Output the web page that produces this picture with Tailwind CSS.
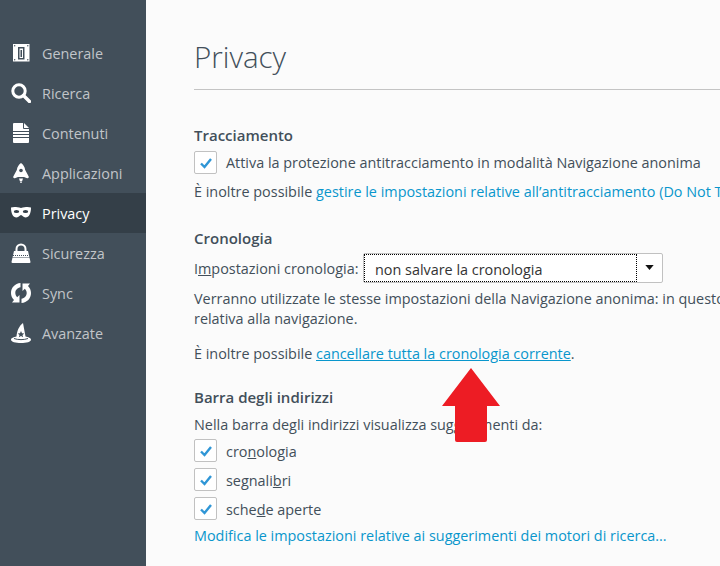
<!DOCTYPE html>
<html lang="it">
<head>
  <meta charset="UTF-8" />
  <title>Privacy</title>
  <script src="https://cdn.jsdelivr.net/npm/@tailwindcss/browser@4"></script>
</head>
<body class="w-[720px] h-[566px] overflow-hidden flex bg-[#fbfbfb] font-['Open_Sans','Noto_Sans',sans-serif] text-[14.4px] text-[#424f5a] relative">

  <aside class="w-[146px] h-full shrink-0 bg-[#424f5a] pt-[33px] text-[14.4px] text-[#c1c5c9]">
    <div class="h-10 flex items-center gap-[11px] pl-[11px]">
      <svg class="w-5 h-5" viewBox="0 0 20 20"><path fill="#fff" d="M2 1h16.500v17.500H2z"/><path fill="#424f5a" d="M7 4h6.500v12.500H7z"/><path fill="#fff" d="M8.500 5.500H12V15H8.500z"/><path fill="#424f5a" d="M9.500 7h1.500v7H9.500z"/><g fill="#424f5a"><circle cx="3.700" cy="2.700" r=".7"/><circle cx="16.800" cy="2.700" r=".7"/><circle cx="3.700" cy="16.800" r=".7"/><circle cx="16.800" cy="16.800" r=".7"/></g></svg>
      <span class="pt-[2px]">Generale</span>
    </div>
    <div class="h-10 flex items-center gap-[11px] pl-[11px]">
      <svg class="w-5 h-5" viewBox="0 0 20 20"><circle cx="8" cy="8" r="6.200" fill="none" stroke="#fff" stroke-width="3"/><path d="M12.500 12.500l6 6" stroke="#fff" stroke-width="3.400" stroke-linecap="round"/></svg>
      <span class="pt-[2px]">Ricerca</span>
    </div>
    <div class="h-10 flex items-center gap-[11px] pl-[11px]">
      <svg class="w-5 h-5" viewBox="0 0 20 20"><path fill="#fff" d="M3 0h10l5 5v14a1 1 0 0 1-1 1H3a1 1 0 0 1-1-1V1a1 1 0 0 1 1-1z"/><path stroke="#424f5a" stroke-width="1.200" d="M2 8.500h16M2 11.500h16M2 14.500h16"/><path fill="none" stroke="#424f5a" d="M12.500 0v5.500H18"/></svg>
      <span class="pt-[2px]">Contenuti</span>
    </div>
    <div class="h-10 flex items-center gap-[11px] pl-[11px]">
      <svg class="w-5 h-5" viewBox="0 0 20 20"><path fill="#fff" d="M10 0c2.200 1.500 3.800 4 4.200 7l3.500 6.500c.3 1-.5 2-1.500 1.700L13 14H7l-3.200 1.200c-1 .3-1.800-.7-1.500-1.700L5.800 7C6.200 4 7.800 1.500 10 0z"/><circle cx="10" cy="7.500" r="1.800" fill="#424f5a"/><path fill="#fff" d="M8 15.500h4l-1 3h-2zM9.300 19h1.400v1.500H9.300z"/></svg>
      <span class="pt-[2px]">Applicazioni</span>
    </div>
    <div class="h-10 flex items-center gap-[11px] pl-[11px] bg-[#343f48] text-white">
      <svg class="w-5 h-5" viewBox="0 0 20 20"><path fill="#fff" d="M0 4.500c3-1 6-.5 10 .5 4-1 7-1.500 10-.5 0 6-2 10-5.500 10-2.500 0-3-2.500-4.500-2.500S8 14.500 5.500 14.500C2 14.500 0 10.500 0 4.500z"/><ellipse cx="5.500" cy="8.500" rx="2.700" ry="1.500" fill="#343f48"/><ellipse cx="14.500" cy="8.500" rx="2.700" ry="1.500" fill="#343f48"/></svg>
      <span class="pt-[2px]">Privacy</span>
    </div>
    <div class="h-10 flex items-center gap-[11px] pl-[11px]">
      <svg class="w-5 h-5" viewBox="0 0 20 20"><path d="M5.500 9V6a4.500 4.500 0 0 1 9 0v3" fill="none" stroke="#fff" stroke-width="2"/><path fill="#fff" d="M3 8h14l2.500 11a1 1 0 0 1-1 1H1.500a1 1 0 0 1-1-1z"/><path stroke="#424f5a" stroke-width="1" stroke-dasharray="1 1" d="M2 12.500h16M1.500 14.500h17"/></svg>
      <span class="pt-[2px]">Sicurezza</span>
    </div>
    <div class="h-10 flex items-center gap-[11px] pl-[11px]">
      <svg class="w-5 h-5" viewBox="0 0 20 20"><path fill="#fff" d="M9.500 0C4 .5 0 4.500 0 10c0 3 1.200 5.300 3 7L1 19.500h7.500v-7.500l-2.300 2.200C5 13 4.300 11.500 4.300 10c0-3 2.200-5.200 5.200-5.700zM10.500 20c5.500-.5 9.500-4.500 9.500-10 0-3-1.200-5.300-3-7l2-2.500h-7.500V8l2.300-2.200C15 7 15.700 8.500 15.700 10c0 3-2.200 5.200-5.200 5.700z"/></svg>
      <span class="pt-[2px]">Sync</span>
    </div>
    <div class="h-10 flex items-center gap-[11px] pl-[11px]">
      <svg class="w-5 h-5" viewBox="0 0 20 20"><path fill="#fff" d="M12 0l2.500 13.500c2.500.5 5.500 1.500 5.500 3.200 0 2-4.500 3.300-10 3.300S0 18.700 0 16.700c0-1.700 3-2.700 5.500-3.200C6 8 8 3 12 0z"/><path fill="#424f5a" d="M10 8l1 2.200 2.300.2-1.800 1.500.6 2.300-2.100-1.300-2.100 1.300.6-2.300-1.800-1.500 2.300-.2z"/><path stroke="#424f5a" fill="none" d="M3 15.500c4 1.500 10 1.500 14 0"/></svg>
      <span class="pt-[2px]">Avanzate</span>
    </div>
  </aside>

  <main class="flex-1 min-w-0 pl-[48px] overflow-hidden whitespace-nowrap">
    <h1 class="h-[89px] pt-[35px] text-[29.500px] leading-[44px] font-light">Privacy</h1>
    <div class="h-px w-[600px] bg-[#c4c4c4]"></div>

    <h2 class="mt-[35px] h-5 leading-5 text-[15px] font-semibold">Tracciamento</h2>
    <div class="mt-[6px] h-[23px] flex items-center gap-[9px]">
      <span class="w-[23px] h-[23px] flex items-center justify-center border border-[#c1c1c1] rounded-[2px] bg-white"><svg class="w-3.5 h-3.5" viewBox="0 0 14 14"><path d="M2 7.500l3.500 3.500L12 3" fill="none" stroke="#2f96d6" stroke-width="2.400"/></svg></span>
      <span>Attiva la protezione antitracciamento in modalità Navigazione anonima</span>
    </div>
    <p class="mt-[8px] h-5 leading-5">È inoltre possibile <a class="text-[#0996cc]">gestire le impostazioni relative all’antitracciamento (Do Not Track)</a></p>

    <h2 class="mt-[26px] h-5 leading-5 text-[15px] font-semibold">Cronologia</h2>
    <div class="mt-[5px] h-[30px] flex items-center">
      <span class="w-[169px] pt-[2px]">I<u>m</u>postazioni cronologia:</span>
      <div class="w-[300px] h-[30px] flex bg-white border border-[#c1c1c1] rounded-[2px]">
        <div class="w-[273px] border border-dotted border-black pl-[10px] leading-[29px] text-[#333]">non salvare la cronologia</div>
        <div class="flex-1 flex items-center justify-center"><svg class="w-[9px] h-[5px] mb-px" viewBox="0 0 10 6"><path d="M0 0h10L5 6z" fill="#111"/></svg></div>
      </div>
    </div>
    <p class="mt-[6px] h-5 leading-5">Verranno utilizzate le stesse impostazioni della Navigazione anonima: in questo caso il browser non salverà la cronologia</p>
    <p class="h-5 leading-5">relativa alla navigazione.</p>
    <p class="mt-[15px] h-5 leading-5">È inoltre possibile <a class="text-[#0996cc] underline">cancellare tutta la cronologia corrente</a>.</p>

    <h2 class="mt-[23px] h-5 leading-5 text-[15px] font-semibold">Barra degli indirizzi</h2>
    <p class="mt-[8px] h-5 leading-5">Nella barra degli indirizzi visualizza suggerimenti da:</p>
    <div class="mt-[4px] flex flex-col gap-[6px]">
      <div class="h-[23px] flex items-center gap-[9px]">
        <span class="w-[23px] h-[23px] flex items-center justify-center border border-[#c1c1c1] rounded-[2px] bg-white"><svg class="w-3.5 h-3.5" viewBox="0 0 14 14"><path d="M2 7.500l3.500 3.500L12 3" fill="none" stroke="#2f96d6" stroke-width="2.400"/></svg></span>
        <span class="pt-[2px]">cro<u>n</u>ologia</span>
      </div>
      <div class="h-[23px] flex items-center gap-[9px]">
        <span class="w-[23px] h-[23px] flex items-center justify-center border border-[#c1c1c1] rounded-[2px] bg-white"><svg class="w-3.5 h-3.5" viewBox="0 0 14 14"><path d="M2 7.500l3.500 3.500L12 3" fill="none" stroke="#2f96d6" stroke-width="2.400"/></svg></span>
        <span class="pt-[2px]">segnali<u>b</u>ri</span>
      </div>
      <div class="h-[23px] flex items-center gap-[9px]">
        <span class="w-[23px] h-[23px] flex items-center justify-center border border-[#c1c1c1] rounded-[2px] bg-white"><svg class="w-3.5 h-3.5" viewBox="0 0 14 14"><path d="M2 7.500l3.500 3.500L12 3" fill="none" stroke="#2f96d6" stroke-width="2.400"/></svg></span>
        <span class="pt-[2px]">sche<u>d</u>e aperte</span>
      </div>
    </div>
    <p class="mt-[6px] h-5 leading-5"><a class="text-[#0996cc]">Modifica le impostazioni relative ai suggerimenti dei motori di ricerca...</a></p>
  </main>

  <svg class="absolute left-[442px] top-[368px] w-[58px] h-[74px]" viewBox="0 0 58 74"><path fill="#ed1c24" d="M29 0l29 38H45v34a2 2 0 0 1-2 2H15a2 2 0 0 1-2-2V38H0z"/></svg>
</body>
</html>
